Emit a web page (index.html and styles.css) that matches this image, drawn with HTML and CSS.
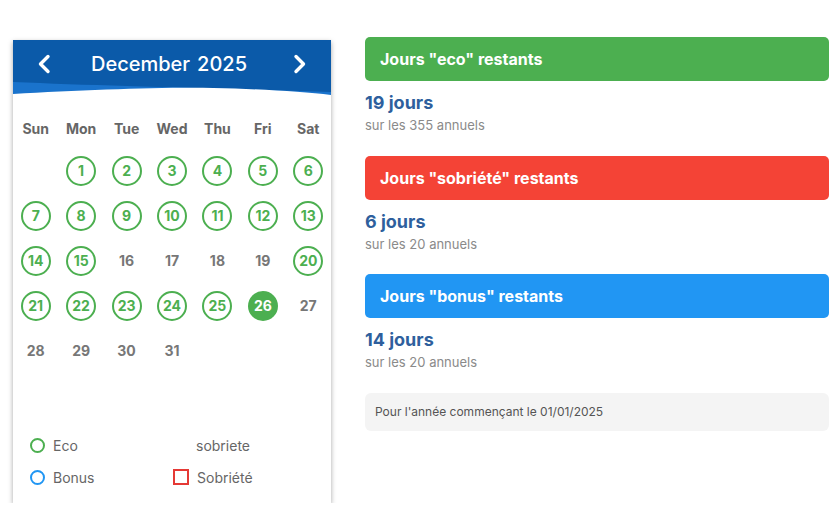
FILE: index.html
```html
<!DOCTYPE html>
<html lang="fr">
<head>
<meta charset="utf-8">
<title>Calendrier</title>
<link rel="stylesheet" href="styles.css">
</head>
<body>
<div class="page">
  <section class="calendar">
    <header class="cal-head">
      <div class="cal-bar">
        <button class="nav" aria-label="Mois précédent">
          <svg width="14" height="20" viewBox="0 0 14 20"><polyline points="11,2.5 3.5,10 11,17.5" fill="none" stroke="#fff" stroke-width="3.4" stroke-linecap="round" stroke-linejoin="round"/></svg>
        </button>
        <div class="cal-title"><span>December</span><span>2025</span></div>
        <button class="nav" aria-label="Mois suivant">
          <svg width="14" height="20" viewBox="0 0 14 20"><polyline points="3,2.5 10.5,10 3,17.5" fill="none" stroke="#fff" stroke-width="3.4" stroke-linecap="round" stroke-linejoin="round"/></svg>
        </button>
      </div>
      <svg class="wave" width="318" height="14" viewBox="0 0 318 14" preserveAspectRatio="none">
        <rect x="0" y="0" width="318" height="14" fill="#0b5aa9"/>
        <path d="M0 0 C 90 4, 200 6, 318 10 L318 14 L0 14 Z" fill="#1a73cc"/>
        <path d="M0 12 C 70 8, 150 5, 200 6 C 250 7, 290 10, 318 13 L318 14 L0 14 Z" fill="#fff"/>
      </svg>
    </header>
    <div class="weekdays">
      <span>Sun</span><span>Mon</span><span>Tue</span><span>Wed</span><span>Thu</span><span>Fri</span><span>Sat</span>
    </div>
    <div class="days">
      <span class="day"></span>
      <span class="day"><b class="eco">1</b></span>
      <span class="day"><b class="eco">2</b></span>
      <span class="day"><b class="eco">3</b></span>
      <span class="day"><b class="eco">4</b></span>
      <span class="day"><b class="eco">5</b></span>
      <span class="day"><b class="eco">6</b></span>
      <span class="day"><b class="eco">7</b></span>
      <span class="day"><b class="eco">8</b></span>
      <span class="day"><b class="eco">9</b></span>
      <span class="day"><b class="eco">10</b></span>
      <span class="day"><b class="eco">11</b></span>
      <span class="day"><b class="eco">12</b></span>
      <span class="day"><b class="eco">13</b></span>
      <span class="day"><b class="eco">14</b></span>
      <span class="day"><b class="eco">15</b></span>
      <span class="day"><b>16</b></span>
      <span class="day"><b>17</b></span>
      <span class="day"><b>18</b></span>
      <span class="day"><b>19</b></span>
      <span class="day"><b class="eco">20</b></span>
      <span class="day"><b class="eco">21</b></span>
      <span class="day"><b class="eco">22</b></span>
      <span class="day"><b class="eco">23</b></span>
      <span class="day"><b class="eco">24</b></span>
      <span class="day"><b class="eco">25</b></span>
      <span class="day"><b class="today">26</b></span>
      <span class="day"><b>27</b></span>
      <span class="day"><b>28</b></span>
      <span class="day"><b>29</b></span>
      <span class="day"><b>30</b></span>
      <span class="day"><b>31</b></span>
    </div>
    <div class="legend">
      <div class="leg"><i class="mk circ green"></i>Eco</div>
      <div class="leg"><i class="mk none"></i>sobriete</div>
      <div class="leg"><i class="mk circ blue"></i>Bonus</div>
      <div class="leg"><i class="mk sq red"></i>Sobriété</div>
    </div>
  </section>

  <section class="stats">
    <div class="stat">
      <div class="bar bar-green">Jours "eco" restants</div>
      <div class="count">19 jours</div>
      <div class="sub">sur les 355 annuels</div>
    </div>
    <div class="stat">
      <div class="bar bar-red">Jours "sobriété" restants</div>
      <div class="count">6 jours</div>
      <div class="sub">sur les 20 annuels</div>
    </div>
    <div class="stat">
      <div class="bar bar-blue">Jours "bonus" restants</div>
      <div class="count">14 jours</div>
      <div class="sub">sur les 20 annuels</div>
    </div>
    <div class="note">Pour l'année commençant le 01/01/2025</div>
  </section>
</div>
</body>
</html>
```

FILE: styles.css
```css
* { box-sizing: border-box; }
html, body { margin: 0; padding: 0; background: #fff; }
body { font-family: Inter, "Noto Sans", "Liberation Sans", sans-serif; color: #333; }

.page {
  display: flex;
  align-items: flex-start;
  gap: 34px;
  padding: 37px 0 0 13px;
}

.calendar {
  width: 318px;
  margin-top: 3px;
  background: #fff;
  box-shadow: 0 2px 5px rgba(0,0,0,0.35);
  padding-bottom: 10px;
}

.cal-head { background: #0b5aa9; }
.cal-bar {
  height: 42px;
  display: flex;
  align-items: center;
  justify-content: space-between;
  padding: 5px 24px 0 24px;
}
.nav {
  background: none;
  border: 0;
  padding: 0;
  width: 14px;
  height: 20px;
  display: flex;
  cursor: pointer;
}
.cal-title {
  color: #fff;
  font-size: 20px;
  font-weight: 500;
  display: flex;
  gap: 7px;
  padding-right: 6px;
}
.wave { display: block; }

.weekdays {
  display: grid;
  grid-template-columns: repeat(7, 1fr);
  margin-top: 22px;
  height: 20px;
  align-items: center;
  text-align: center;
  font-size: 14px;
  font-weight: 700;
  color: #666;
  margin-bottom: 10px;
}

.days {
  display: grid;
  grid-template-columns: repeat(7, 1fr);
  grid-auto-rows: 45px;
  height: 270px;
  align-content: start;
}
.day {
  display: flex;
  align-items: center;
  justify-content: center;
}
.day b {
  width: 30px;
  height: 30px;
  border-radius: 50%;
  display: flex;
  align-items: center;
  justify-content: center;
  font-size: 14px;
  font-weight: 700;
  color: #777;
}
.day b.eco {
  border: 2px solid #4caf50;
  color: #4caf50;
}
.day b.today {
  background: #4caf50;
  color: #fff;
}

.legend {
  display: grid;
  grid-template-columns: 143px 1fr;
  grid-auto-rows: 32px;
  padding-left: 17px;
  margin-top: 11px;
  font-size: 14px;
  color: #666;
}
.leg {
  display: flex;
  align-items: center;
  gap: 8px;
}
.mk {
  display: inline-block;
  width: 15px;
  height: 15px;
}
.mk.circ { border-radius: 50%; border: 2px solid; }
.mk.green { border-color: #4caf50; }
.mk.blue { border-color: #2196f3; }
.mk.sq { width: 16px; height: 16px; border: 2px solid #f44336; }
.mk.red { border-color: #e53935; }
.mk.none { visibility: hidden; width: 15px; }

.stats {
  width: 464px;
  display: flex;
  flex-direction: column;
}
.stat { height: 118.5px; }
.bar {
  height: 44px;
  border-radius: 5px;
  color: #fff;
  font-size: 16px;
  font-weight: 700;
  display: flex;
  align-items: center;
  padding-left: 15px;
}
.bar-green { background: #4caf50; }
.bar-red { background: #f44336; }
.bar-blue { background: #2196f3; }
.count {
  margin-top: 11px;
  font-size: 18px;
  font-weight: 700;
  color: #2e5f9d;
  line-height: 22px;
}
.sub {
  font-size: 13px;
  color: #8a8a8a;
  line-height: 22px;
}
.note {
  margin-top: 0;
  height: 38px;
  border-radius: 6px;
  background: #f4f4f4;
  display: flex;
  align-items: center;
  padding-left: 10px;
  font-size: 12px;
  color: #555;
}
```
